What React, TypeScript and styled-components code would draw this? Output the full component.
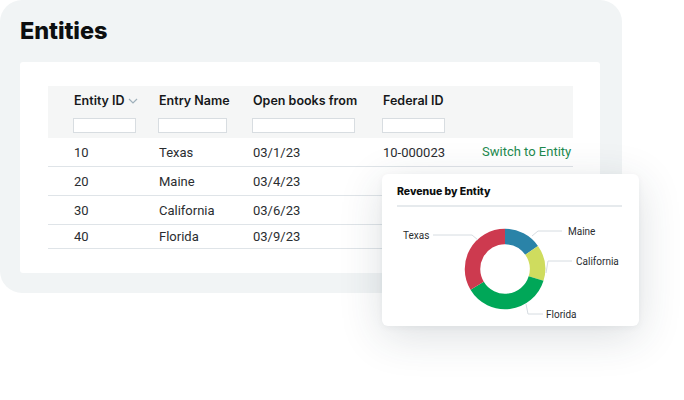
import React from "react";
import styled, { createGlobalStyle } from "styled-components";

const GlobalStyle = createGlobalStyle`
  html, body { margin: 0; padding: 0; background: #ffffff; }
  body { font-family: Roboto, "Liberation Sans", Arial, sans-serif; color: #282b2e; }
  * { box-sizing: border-box; }
`;

const Stage = styled.div`
  position: relative;
  width: 684px;
  height: 400px;
  overflow: hidden;
`;

const Panel = styled.section`
  width: 622px;
  height: 293px;
  background: #f1f4f5;
  border-radius: 22px;
  padding: 17px 22px 0 20px;
  display: flex;
  flex-direction: column;
`;

const Title = styled.h1`
  margin: 0;
  font-family: Inter, "Liberation Sans", Arial, sans-serif;
  font-weight: 800;
  font-size: 23.5px;
  line-height: 28px;
  color: #0d0f10;
  letter-spacing: -0.1px;
`;

const Card = styled.div`
  margin-top: 17px;
  width: 580px;
  height: 211px;
  background: #ffffff;
  border-radius: 3px;
  padding: 24px 27px 0 28px;
`;

const COLS = "85px 94px 130px 99px 1fr";

const HeaderBlock = styled.div`
  background: #f5f6f6;
  height: 52px;
  padding: 4px 0 0 26px;
  display: grid;
  grid-template-columns: ${COLS};
  grid-template-rows: 20px 20px;
  row-gap: 5px;
  align-items: center;
`;

const HeadCell = styled.div`
  font-family: Inter, "Liberation Sans", Arial, sans-serif;
  font-weight: 600;
  font-size: 12.5px;
  color: #16181a;
  display: flex;
  align-items: center;
  gap: 3px;
  white-space: nowrap;
`;

const FilterInput = styled.div<{ $w: number }>`
  width: ${(p) => p.$w}px;
  height: 15px;
  background: #ffffff;
  border: 1px solid #d8dde1;
  margin-left: -1px;
`;

const Row = styled.div<{ $h?: number }>`
  height: ${(p) => p.$h ?? 29}px;
  padding-left: 26px;
  display: grid;
  grid-template-columns: ${COLS};
  align-items: center;
  border-bottom: 1px solid #dfe4e8;
  font-size: 13px;
  color: #2a2d30;
`;

const Cell = styled.div`
  white-space: nowrap;
`;

const LinkCell = styled.div`
  color: #1d8a4e;
  white-space: nowrap;
  margin-top: -2px;
`;

const ChartCard = styled.div`
  position: absolute;
  left: 382px;
  top: 174px;
  width: 257px;
  height: 152px;
  background: #ffffff;
  border-radius: 6px;
  box-shadow: 0 10px 44px rgba(40, 55, 70, 0.16), 0 2px 6px rgba(40, 55, 70, 0.05);
  padding: 11px 17px 0 15px;
  display: flex;
  flex-direction: column;
`;

const ChartTitle = styled.div`
  font-family: Inter, "Liberation Sans", Arial, sans-serif;
  font-weight: 800;
  font-size: 10.5px;
  line-height: 14px;
  color: #0d0f10;
  padding-bottom: 6px;
  border-bottom: 2px solid #e6eaed;
`;

const ChartSvg = styled.svg`
  display: block;
  margin-left: -15px;
  overflow: visible;
`;

const Label = styled.text`
  font-family: Roboto, "Liberation Sans", Arial, sans-serif;
  font-size: 10px;
  fill: #2a2d30;
  dominant-baseline: central;
`;

const Chevron = () => (
  <svg width="10" height="6" viewBox="0 0 10 6" style={{ marginTop: 1 }}>
    <path d="M1 1l4 4 4-4" fill="none" stroke="#9fb0bb" strokeWidth="1.2" />
  </svg>
);

const rows = [
  { id: "10", name: "Texas", date: "03/1/23", fed: "10-000023", link: true },
  { id: "20", name: "Maine", date: "03/4/23", fed: "" },
  { id: "30", name: "California", date: "03/6/23", fed: "" },
  { id: "40", name: "Florida", date: "03/9/23", fed: "" },
];

const CX = 123;
const CY = 62;
const R = 32.5;

function pt(a: number) {
  const r = (a * Math.PI) / 180;
  return [CX + R * Math.sin(r), CY - R * Math.cos(r)];
}

function arc(a0: number, a1: number) {
  const [x0, y0] = pt(a0);
  const [x1, y1] = pt(a1);
  const large = a1 - a0 > 180 ? 1 : 0;
  return `M${x0.toFixed(2)} ${y0.toFixed(2)} A${R} ${R} 0 ${large} 1 ${x1.toFixed(2)} ${y1.toFixed(2)}`;
}

const segments = [
  { a0: 0, a1: 55, color: "#2a83a8" },
  { a0: 55, a1: 107, color: "#cfdc5e" },
  { a0: 107, a1: 239, color: "#00a758" },
  { a0: 239, a1: 360, color: "#cd3a4f" },
];

const Donut = () => (
  <ChartSvg width="257" height="121" viewBox="0 0 257 121">
    {segments.map((s) => (
      <path key={s.color} d={arc(s.a0, s.a1 === 360 ? 359.99 : s.a1)} fill="none" stroke={s.color} strokeWidth="15.5" />
    ))}
    <g fill="none" stroke="#d6dce1" strokeWidth="1">
      <polyline points="51,28 90,28 96,33" />
      <polyline points="150,29 156,24 180,24" />
      <polyline points="164,66 166,54 190,54" />
      <polyline points="144,97 146,107 161,107" />
    </g>
    <Label x="21" y="28">Texas</Label>
    <Label x="186" y="24">Maine</Label>
    <Label x="194" y="54">California</Label>
    <Label x="164" y="107">Florida</Label>
  </ChartSvg>
);

export default function App() {
  return (
    <>
      <GlobalStyle />
      <Stage>
        <Panel>
          <Title>Entities</Title>
          <Card>
            <HeaderBlock>
              <HeadCell>
                Entity ID <Chevron />
              </HeadCell>
              <HeadCell>Entry Name</HeadCell>
              <HeadCell>Open books from</HeadCell>
              <HeadCell>Federal ID</HeadCell>
              <div />
              <FilterInput $w={63} />
              <FilterInput $w={69} />
              <FilterInput $w={103} />
              <FilterInput $w={63} />
              <div />
            </HeaderBlock>
            {rows.map((r, i) => (
              <Row key={r.id} $h={i === rows.length - 1 ? 24 : 29}>
                <Cell>{r.id}</Cell>
                <Cell>{r.name}</Cell>
                <Cell>{r.date}</Cell>
                <Cell>{r.fed}</Cell>
                {r.link ? <LinkCell>Switch to Entity</LinkCell> : <div />}
              </Row>
            ))}
          </Card>
        </Panel>
        <ChartCard>
          <ChartTitle>Revenue by Entity</ChartTitle>
          <Donut />
        </ChartCard>
      </Stage>
    </>
  );
}
